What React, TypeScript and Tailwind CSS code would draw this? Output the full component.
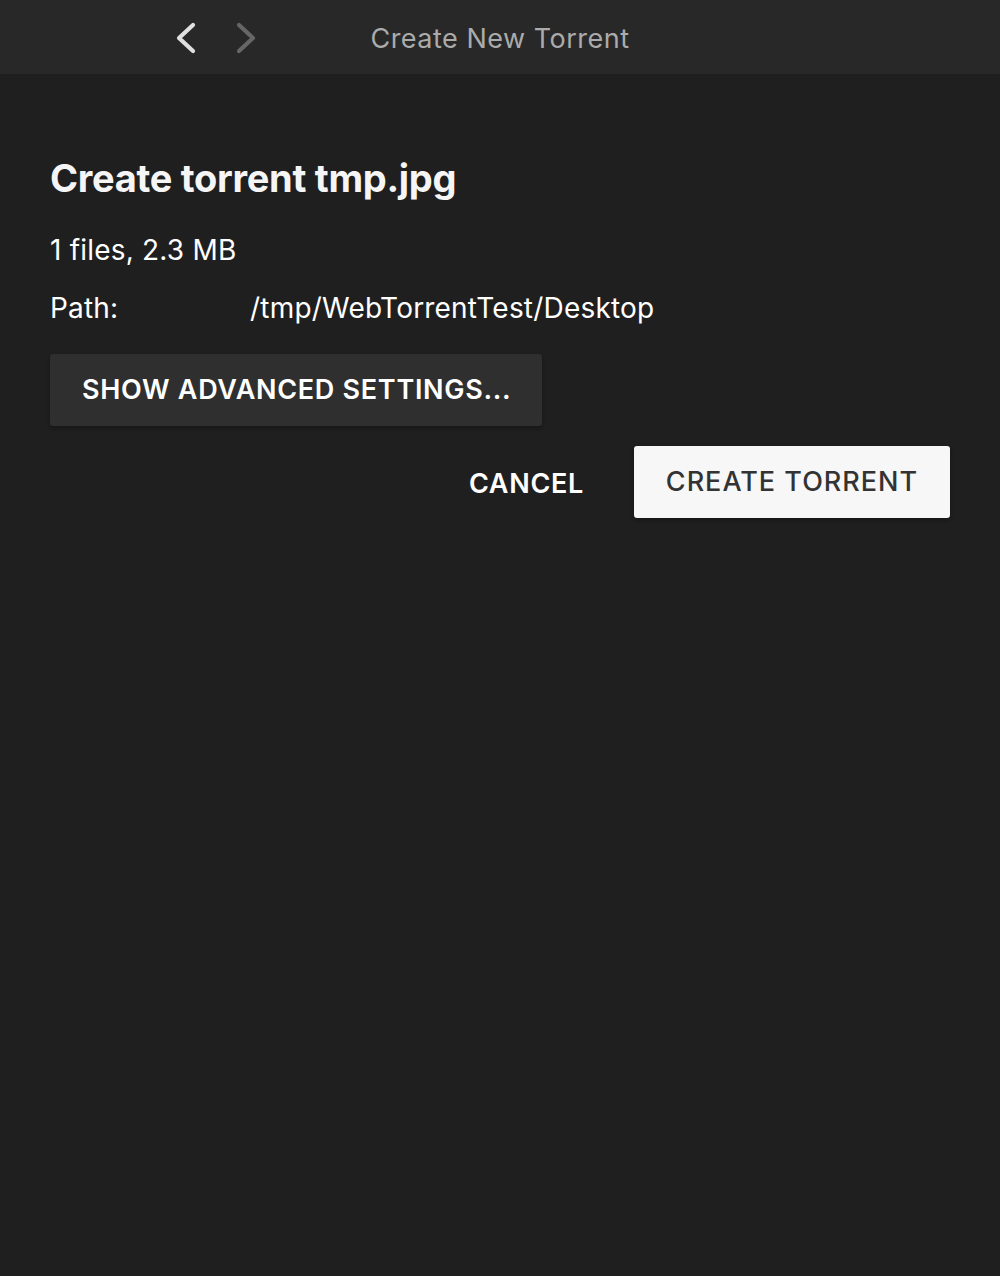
import React from "react";

export default function App() {
  return (
    <div
      className="w-[1000px] h-[1276px] bg-[#1f1f1f] flex flex-col"
      style={{ fontFamily: "Inter, 'Noto Sans', sans-serif" }}
    >
      <div className="h-[74px] bg-[#282828] relative flex items-center justify-center shrink-0">
        <div className="absolute left-[172px] top-[18px] flex gap-[32px]">
          <svg width="28" height="40" viewBox="0 0 28 40">
            <path d="M21 7 L7 20 L21 33" fill="none" stroke="#e0e0e0" strokeWidth="4.2" strokeLinecap="round" strokeLinejoin="round" />
          </svg>
          <svg width="28" height="40" viewBox="0 0 28 40">
            <path d="M7 7 L21 20 L7 33" fill="none" stroke="#666666" strokeWidth="4.2" strokeLinecap="round" strokeLinejoin="round" />
          </svg>
        </div>
        <span className="text-[27px] text-[#ababab] tracking-[0.5px] mt-[4px]">Create New Torrent</span>
      </div>
      <div className="px-[50px] pt-[80px] flex flex-col">
        <h1 className="text-[38px] font-bold text-[#f5f5f5] leading-[48px] tracking-[-0.3px]">
          Create torrent tmp.jpg
        </h1>
        <div className="mt-[32px] text-[28px] text-white leading-[32px] tracking-[0.2px]">1 files, 2.3 MB</div>
        <div className="mt-[26px] flex text-[28px] text-white leading-[32px] tracking-[0.2px]">
          <span className="w-[200px]">Path:</span>
          <span>/tmp/WebTorrentTest/Desktop</span>
        </div>
        <div className="mt-[30px]">
          <button className="h-[72px] w-[492px] pl-[32px] text-left bg-[#2f2f2f] rounded-[3px] shadow-[0_2px_4px_rgba(0,0,0,0.3)] text-white text-[27px] font-semibold tracking-[0.7px]">
            SHOW ADVANCED SETTINGS...
          </button>
        </div>
        <div className="mt-[20px] flex justify-end items-center gap-[50px]">
          <span className="text-white text-[27px] font-semibold tracking-[0.7px] mt-[4px]">CANCEL</span>
          <button className="h-[72px] w-[316px] bg-[#f7f7f7] rounded-[3px] shadow-[0_2px_4px_rgba(0,0,0,0.3)] text-[#333333] text-[27px] font-medium tracking-[1px]">
            CREATE TORRENT
          </button>
        </div>
      </div>
    </div>
  );
}
